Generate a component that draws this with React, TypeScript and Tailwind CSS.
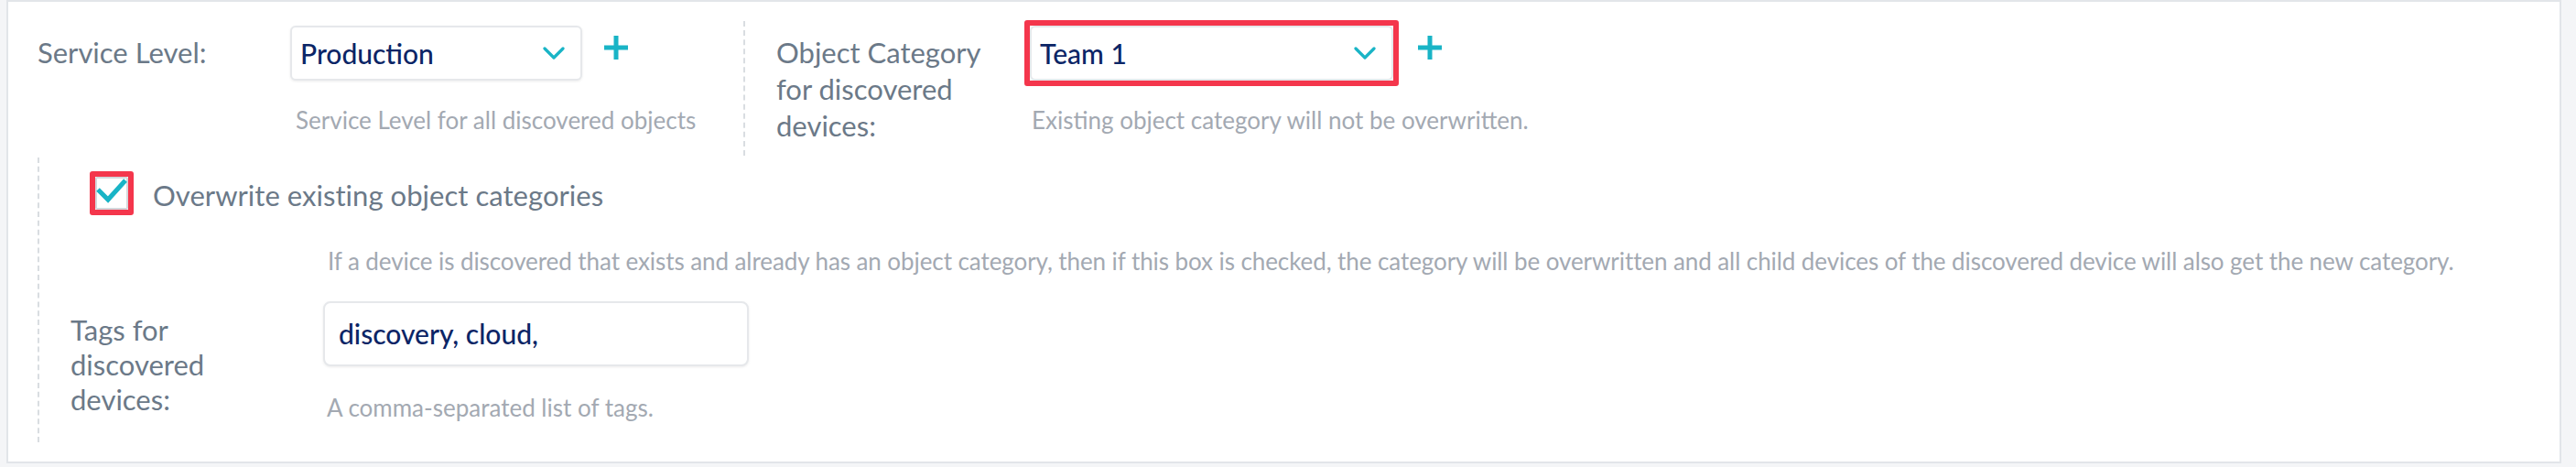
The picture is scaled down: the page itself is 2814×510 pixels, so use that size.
import type { ReactNode } from 'react';

const labelText = 'text-[31px] leading-[40px] text-[#6b7988]';
const hintText = 'text-[26px] leading-[36px] text-[#a3a9b2]';
const valueText = 'text-[30px] font-medium text-[#0b2566]';
const teal = '#19b4c6';

function Chevron() {
  return (
    <svg width="24" height="14" viewBox="0 0 24 14" fill="none" className="shrink-0">
      <polyline
        points="2,2 12,12 22,2"
        stroke={teal}
        strokeWidth="3.2"
        strokeLinecap="round"
        strokeLinejoin="round"
      />
    </svg>
  );
}

function AddButton() {
  return (
    <button type="button" aria-label="Add" className="mt-[10px] shrink-0">
      <svg width="28" height="28" viewBox="0 0 28 28" fill="none">
        <path d="M14 1v26M1 14h26" stroke={teal} strokeWidth="5" />
      </svg>
    </button>
  );
}

// red annotation frame drawn over a control in the screenshot
function Highlight({ children }: { children: ReactNode }) {
  return (
    <div className="relative">
      {children}
      <div className="pointer-events-none absolute -inset-[6px] rounded-[3px] border-[6px] border-[#f4364c]" />
    </div>
  );
}

function SelectBox({ value, className }: { value: string; className: string }) {
  return (
    <div
      className={`flex h-[60px] items-center justify-between rounded-[6px] border-2 border-[#e6e8eb] bg-white pl-[9px] pr-[17px] shadow-[0_1px_3px_rgba(0,0,0,0.08)] ${className}`}
    >
      <span className={valueText}>{value}</span>
      <Chevron />
    </div>
  );
}

function Checkbox() {
  return (
    <div className="flex h-[36px] w-[36px] items-center justify-center rounded-[2px] border-2 border-[#d4d8dc] bg-white">
      <svg width="36" height="36" viewBox="0 0 36 36" fill="none" className="overflow-visible">
        <polyline
          points="3,14 14,25 33,4"
          stroke={teal}
          strokeWidth="5"
          strokeLinecap="butt"
          strokeLinejoin="miter"
        />
      </svg>
    </div>
  );
}

export default function App() {
  return (
    <div className="min-h-screen bg-[#f4f5f7] font-['Lato',sans-serif]">
      <div className="ml-[7px] h-[506px] w-[2791px] border-2 border-[#e2e5e9] bg-white">
        {/* top row: service level + object category */}
        <div className="mt-[21px] flex h-[147px]">
          <div className="flex w-[803px] pl-[32px] pt-[5px]">
            <div className={`w-[276px] shrink-0 pt-[9px] ${labelText}`}>Service Level:</div>
            <div>
              <div className="flex items-start gap-[23px]">
                <SelectBox value="Production" className="w-[319px]" />
                <AddButton />
              </div>
              <p className={`mt-[25px] pl-[6px] ${hintText}`}>Service Level for all discovered objects</p>
            </div>
          </div>

          <div className="flex border-l-2 border-dashed border-[#d9dde1] pl-[34px] pt-[5px]">
            <div className={`w-[277px] shrink-0 pr-[20px] pt-[9px] ${labelText}`}>
              Object Category for discovered devices:
            </div>
            <div>
              <div className="flex items-start gap-[26px]">
                <Highlight>
                  <SelectBox value="Team 1" className="w-[397px]" />
                </Highlight>
                <AddButton />
              </div>
              <p className={`mt-[25px] pl-[2px] ${hintText}`}>Existing object category will not be overwritten.</p>
            </div>
          </div>
        </div>

        {/* dependent settings */}
        <div className="ml-[32px] mt-[2px] h-[311px] border-l-2 border-dashed border-[#d9dde1] pt-[21px]">
          <label className="flex items-start gap-[27px] pl-[61px]">
            <Highlight>
              <Checkbox />
            </Highlight>
            <span className={`tracking-[0.04px] ${labelText}`}>Overwrite existing object categories</span>
          </label>

          <p className={`mt-[34px] pl-[315px] tracking-[-0.08px] ${hintText}`}>
            If a device is discovered that exists and already has an object category, then if this box is checked, the
            category will be overwritten and all child devices of the discovered device will also get the new category.
          </p>

          <div className="mt-[26px] flex pl-[34px]">
            <div className="w-[276px] shrink-0 pr-[66px] pt-[12px] text-[31px] leading-[38px] text-[#6b7988]">
              Tags for discovered devices:
            </div>
            <div>
              <div className="flex h-[71px] w-[465px] items-center rounded-[8px] border-2 border-[#e6e8eb] bg-white pl-[15px] shadow-[0_1px_3px_rgba(0,0,0,0.08)]">
                <span className={valueText}>discovery, cloud,</span>
              </div>
              <p className={`mt-[27px] pl-[4px] ${hintText}`}>A comma-separated list of tags.</p>
            </div>
          </div>
        </div>
      </div>
    </div>
  );
}
